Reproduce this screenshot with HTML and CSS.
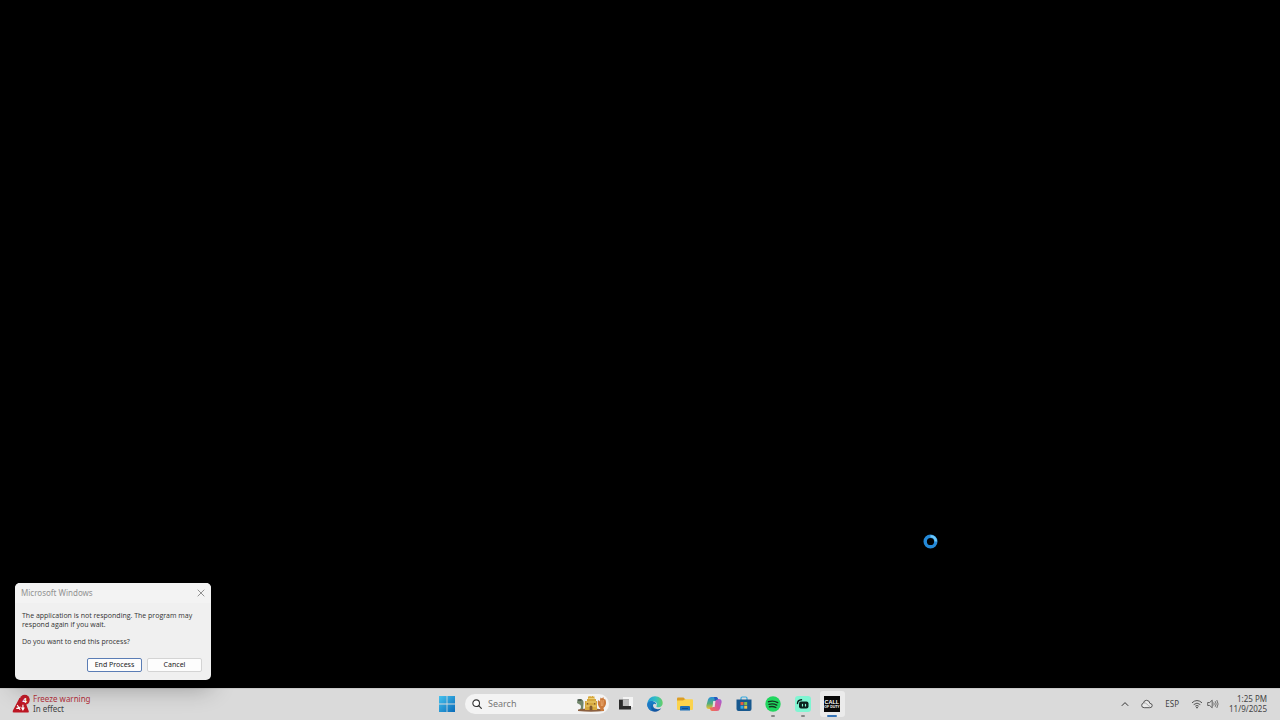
FILE: index.html
```html
<!DOCTYPE html>
<html lang="en">

<head>
  <meta charset="UTF-8">
  <meta name="viewport" content="width=device-width, initial-scale=1.0">
  <title>Desktop</title>
  <link rel="stylesheet" href="styles.css">
</head>

<body>
  <main class="desktop">
    <svg class="busy" viewBox="0 0 16 16" aria-hidden="true">
      <circle cx="8" cy="8" r="5" fill="none" stroke="#2489d8" stroke-width="3.2"/>
      <path d="M8 3A5 5 0 0 1 13 8" fill="none" stroke="#6cc8fa" stroke-width="2.4"/>
    </svg>

    <section class="dialog" role="dialog" aria-labelledby="dialog-title">
      <header class="dialog-bar">
        <h1 id="dialog-title">Microsoft Windows</h1>
        <button class="close" type="button" aria-label="Close">
          <svg viewBox="0 0 8 8"><path d="M.7.7l6.6 6.6M7.3.7L.7 7.3" fill="none" stroke="#777" stroke-width=".8"/></svg>
        </button>
      </header>
      <div class="dialog-text">
        <p>The application is not responding. The program may respond again if you wait.</p>
        <p>Do you want to end this process?</p>
      </div>
      <div class="dialog-buttons">
        <button class="btn primary" type="button">End Process</button>
        <button class="btn" type="button">Cancel</button>
      </div>
    </section>
  </main>

  <footer class="taskbar">
    <button class="weather" type="button">
      <svg class="weather-icon" viewBox="0 0 20 20">
        <path d="M8 3.500L.8 17q-.7 2 1.300 2h14q2.200 0 1.400-2L14 8z" fill="#bd1724"/>
        <circle cx="13.400" cy="5.600" r="5.300" fill="#c21c29"/>
        <path d="M5.500 11l3 5M4.500 14.800l4.500-1.600M11.500 10.800v5.400M10 13.600l1.500 2.600 1.400-2.600" fill="none" stroke="#fff" stroke-width="1.200"/>
        <text class="badge" x="13.400" y="8.500" text-anchor="middle">4</text>
      </svg>
      <span class="weather-text">
        <span class="alert">Freeze warning</span>
        <span>In effect</span>
      </span>
    </button>

    <nav class="center">
      <button class="start" type="button" aria-label="Start">
        <svg viewBox="0 0 16 16">
          <defs>
            <linearGradient id="win" gradientUnits="userSpaceOnUse" x1="0" y1="0" x2="16" y2="16">
              <stop offset="0" stop-color="#45c2ee"/>
              <stop offset="1" stop-color="#096bb9"/>
            </linearGradient>
          </defs>
          <path d="M0 0h7.600v7.600H0zM8.400 0H16v7.600H8.400zM0 8.400h7.600V16H0zM8.400 8.400H16V16H8.400z" fill="url(#win)"/>
        </svg>
      </button>

      <label class="search">
        <svg class="glass" viewBox="0 0 12 12">
          <circle cx="5" cy="5" r="4" fill="#fff" stroke="#333" stroke-width="1.300"/>
          <path d="M8 8l3.200 3.200" stroke="#333" stroke-width="1.500" stroke-linecap="round"/>
        </svg>
        <input type="search" placeholder="Search" aria-label="Search">
        <svg class="castle" viewBox="0 0 30 18">
          <path d="M3 15q3-2 1.500-5L1 8q0-4 3.600-4 3 .5 3 4L7 15z" fill="#71866b"/>
          <path d="M1.500 5h4" stroke="#3b4a42" stroke-width="1.400"/>
          <path d="M2 14.500q12-2 26 0v1.500q-13 1.500-26 0z" fill="#8c6040"/>
          <path d="M9 6h2V4h1V1.500h1.500V1h1v.5h1.500V1h1v.5h1.500V4H20v2h1v9H9z" fill="#d6a83c"/>
          <path d="M10 7h10M10 11h10M12.500 3.500h5.500" stroke="#edcf72" stroke-width="1"/>
          <path d="M13.600 15v-3.500q1.400-2 2.800 0V15zM11 8h1.200v1.600H11zM18 8h1.200v1.600H18z" fill="#80572d"/>
          <path d="M24.500 16q.5-2-1.500-4-2-3.500-.8-7l1.500 1.500.8-4 1.500 1 1.300-1.500.6 2 1.500.5q1.500 4-.5 7L27.500 13l.5 3z" fill="#cc7a3b"/>
          <path d="M25 5l.4 6M27.200 5l-.5 6" stroke="#edae73" stroke-width=".9"/>
        </svg>
      </label>

      <div class="apps">
        <button class="app" type="button" aria-label="Task view">
          <svg viewBox="0 0 16 16">
            <path d="M5 1h10v10H5z" fill="#f4f4f4"/>
            <path d="M1 3.500h10v8H1z" fill="#555"/>
            <path d="M5 3.500h6V10H5z" fill="#bdbdbd"/>
            <path d="M1 4h3.500v6H13v3.500H1z" fill="#2b2b2b"/>
          </svg>
        </button>
        <button class="app" type="button" aria-label="Edge">
          <svg viewBox="0 0 16 16">
            <defs>
              <linearGradient id="edge-top" x1="0" y1="0" x2="1" y2="0">
                <stop offset="0" stop-color="#239cd8"/>
                <stop offset=".55" stop-color="#31bfc4"/>
                <stop offset="1" stop-color="#66cf63"/>
              </linearGradient>
              <linearGradient id="edge-low" x1="0" y1="0" x2="0" y2="1">
                <stop offset="0" stop-color="#1686cc"/>
                <stop offset="1" stop-color="#114f9c"/>
              </linearGradient>
            </defs>
            <path d="M.3 8C.7 3.200 4 .3 8 .3c4.600 0 7.700 3 7.700 6.700 0 2.500-1.700 4.200-4.200 4.200-1.700 0-2.700-.7-2-1.500C11 7.500 9 5.200 6 5.200 3.500 5.200 1 6.300.3 8z" fill="url(#edge-top)"/>
            <path d="M.3 8C1 5.700 3.500 4.700 6 5.200c2 .4 3.400 1.700 3.300 3.300C7.500 7 6 8 6 9.800c0 2.800 4.300 4.500 8.300 2.500C12.700 14.600 10.500 15.700 8 15.700 3.600 15.700 0 12.400.3 8z" fill="url(#edge-low)"/>
            <path d="M6 5.200C3 6.700 2.500 11.500 6 15.300 2.500 14.400 0 11.500.3 8 1 6 3.500 4.800 6 5.200z" fill="#1b79c5"/>
          </svg>
        </button>
        <button class="app" type="button" aria-label="File Explorer">
          <svg viewBox="0 0 16 16">
            <path d="M0 2.500Q0 1.500 1 1.500h5.500l2 2V7H0z" fill="#dc9d24"/>
            <path d="M0 4.500h6l2-1.300h7q1 0 1 1V13q0 1-1 1H1q-1 0-1-1z" fill="#fbd34c"/>
            <path d="M3 14.500v-3.500q0-1 1-1h8q1 0 1 1v3.500z" fill="#1d70b8"/>
            <path d="M5 12h6v1H5z" fill="#104f8c"/>
          </svg>
        </button>
        <button class="app" type="button" aria-label="Copilot">
          <svg viewBox="0 0 16 16">
            <defs>
              <linearGradient id="cop-left" x1="0" y1="0" x2="0" y2="1">
                <stop offset="0" stop-color="#248edf"/>
                <stop offset=".55" stop-color="#55ae76"/>
                <stop offset="1" stop-color="#f2c32e"/>
              </linearGradient>
              <linearGradient id="cop-right" x1="1" y1="0" x2="0" y2="1">
                <stop offset="0" stop-color="#9c61dc"/>
                <stop offset=".5" stop-color="#db5695"/>
                <stop offset="1" stop-color="#f57842"/>
              </linearGradient>
            </defs>
            <path d="M5 1h5q1.500 0 2 2l.5 1.500h-2q-1.500 0-2 1.500L6.700 11q-.7 2-2.500 2H3Q0 13 .4 9.500L2 3.500Q2.600 1 5 1z" fill="url(#cop-left)"/>
            <path d="M11 15H6q-1.500 0-2-2l-.5-1.500h2q1.500 0 2-1.500L9.300 5q.7-2 2.500-2H13q3 0 2.600 3.500L14 12.500q-.6 2.500-3 2.500z" fill="url(#cop-right)"/>
            <path d="M7.200 5h2.200L8.700 11H6.500z" fill="#e5dedf"/>
            <path d="M8 1h2q1.500 0 2 2l.2.500Q10 3 9 5z" fill="#2456bd"/>
          </svg>
        </button>
        <button class="app" type="button" aria-label="Microsoft Store">
          <svg viewBox="0 0 16 16">
            <path d="M5 4V2.200Q5 1 6.200 1h3.600Q11 1 11 2.200V4" fill="none" stroke="#33a8df" stroke-width="1.200"/>
            <path d="M.5 3.500h15V13q0 2-2 2h-11q-2 0-2-2z" fill="#17588e"/>
            <path d="M4.500 6h3v3h-3z" fill="#e65c40"/>
            <path d="M8.200 6h3v3h-3z" fill="#83bd49"/>
            <path d="M4.500 9.700h3v3h-3z" fill="#35a9e1"/>
            <path d="M8.200 9.700h3v3h-3z" fill="#efc34a"/>
          </svg>
        </button>
        <button class="app running" type="button" aria-label="Spotify">
          <svg viewBox="0 0 16 16">
            <circle cx="8" cy="8" r="7.700" fill="#20d65f"/>
            <path d="M3.500 5.700q5-1.500 9.200.9M4 8.300q4.200-1.200 7.800.8M4.500 10.800q3.400-.9 6.400.7" fill="none" stroke="#14351f" stroke-width="1.400" stroke-linecap="round"/>
          </svg>
        </button>
        <button class="app running" type="button" aria-label="Streamlabs">
          <svg viewBox="0 0 16 16">
            <rect width="16" height="16" rx="3" fill="#80f5d2"/>
            <rect x="4" y="5.500" width="9.500" height="7" rx="2" fill="#0b211d"/>
            <path d="M2.500 7.500q0-3.500 4-3.800" fill="none" stroke="#0b211d" stroke-width="1.400" stroke-linecap="round"/>
            <path d="M7.500 8.300v1.600M10.500 8.300v1.600" stroke="#80f5d2" stroke-width="1.200" stroke-linecap="round"/>
          </svg>
        </button>
        <button class="app running active" type="button" aria-label="Call of Duty">
          <svg viewBox="0 0 32 32">
            <path d="M0 0h32v32H0z" fill="#080808"/>
            <text class="cod-top" x="1" y="16">CALL</text>
            <text class="cod-low" x="16" y="24" text-anchor="middle">OF DUTY</text>
          </svg>
        </button>
      </div>
    </nav>

    <div class="tray">
      <button type="button" aria-label="Show hidden icons">
        <svg class="chevron" viewBox="0 0 8 8"><path d="M.8 5.800L4 2.600l3.200 3.200" fill="none" stroke="#333" stroke-width="1"/></svg>
      </button>
      <button type="button" aria-label="OneDrive">
        <svg class="cloud" viewBox="0 0 12 10">
          <path d="M3.200 8.700h5.500q2.500 0 2.500-2.200 0-2-2.300-2.100Q8.400 1.300 5.500 1.300 2.800 1.300 2.600 4 .7 4.400.7 6.400q0 2.300 2.500 2.300z" fill="#e9e9e9" stroke="#444" stroke-width=".9"/>
          <path d="M3 4q1.800-.3 3 1.200t3 2.300" fill="none" stroke="#888" stroke-width=".6"/>
        </svg>
      </button>
      <button class="lang" type="button">ESP</button>
      <button class="network" type="button" aria-label="Network and volume">
        <svg viewBox="0 0 12 10">
          <path d="M1 3.800q5-4.500 10 0M2.700 5.600q3.300-3 6.600 0M4.300 7.200q1.700-1.500 3.400 0" fill="none" stroke="#444" stroke-width=".9"/>
          <circle cx="6" cy="8.600" r=".8" fill="#333"/>
        </svg>
        <svg viewBox="0 0 12 10">
          <path d="M.7 3.500h2L5.200 1.200v7.600L2.700 6.500h-2z" fill="none" stroke="#444" stroke-width=".8"/>
          <path d="M6.700 3.500q1 1.500 0 3M8.200 2.200q2 2.800 0 5.600M9.800 1q2.600 4 0 8" fill="none" stroke="#555" stroke-width=".8"/>
        </svg>
      </button>
      <button class="clock" type="button">
        <span>1:25 PM</span>
        <span>11/9/2025</span>
      </button>
    </div>
  </footer>
</body>

</html>
```

FILE: styles.css
```css
* {
  box-sizing: border-box;
}

body {
  display: flex;
  flex-direction: column;
  min-height: 100vh;
  margin: 0;
  background: #000;
  font-family: "Noto Sans", "Open Sans", sans-serif;
  font-size: 8px;
  line-height: 10px;
  color: #444;
}

button {
  padding: 0;
  border: 0;
  background: none;
  font: inherit;
  color: inherit;
}

svg {
  display: block;
}

.desktop {
  position: relative;
  flex: 1;
}

.busy {
  position: absolute;
  left: 922px;
  top: 533px;
  width: 17px;
  height: 17px;
}

.dialog {
  position: absolute;
  z-index: 1;
  left: 15px;
  bottom: 8px;
  width: 196px;
  padding-bottom: 8px;
  border-radius: 5px;
  background: #f0f0f0;
  box-shadow: 0 8px 24px rgba(0, 0, 0, 0.3);
}

.dialog-bar {
  display: flex;
  align-items: center;
  justify-content: space-between;
  height: 20px;
  padding: 0 6px;
  border-radius: 5px 5px 0 0;
  background: #f3f3f3;
}

.dialog-bar h1 {
  margin: 0;
  font-size: 8px;
  font-weight: 400;
  color: #929292;
}

.close svg {
  width: 8px;
  height: 8px;
}

.dialog-text {
  padding: 8px 7px 0;
  font-family: "Open Sans", sans-serif;
  font-size: 7px;
  line-height: 9px;
  color: #333;
}

.dialog-text p {
  margin: 0 0 8px;
}

.dialog-buttons {
  display: flex;
  justify-content: flex-end;
  gap: 5px;
  padding: 4px 9px 0;
}

.btn {
  width: 55px;
  height: 14px;
  border: 1px solid #d4d4d4;
  border-radius: 2px;
  background: #fdfdfd;
  font-size: 7px;
  color: #222;
}

.primary {
  border-color: #5b7db5;
}

.taskbar {
  display: grid;
  grid-template-columns: 1fr auto 1fr;
  align-items: center;
  height: 32px;
  padding-bottom: 2px;
  border-top: 1px solid #c9c9c9;
  background: #dadada;
}

.weather {
  display: flex;
  align-items: center;
  justify-self: start;
  gap: 2px;
  padding-left: 12px;
  text-align: left;
}

.weather-icon {
  width: 19px;
  height: 20px;
}

.badge {
  font-size: 8px;
  font-weight: 700;
  fill: #fff;
}

.weather-text span {
  display: block;
}

.weather-text .alert {
  color: #b5303a;
}

.center {
  display: flex;
  align-items: center;
}

.start {
  width: 28px;
}

.start svg {
  width: 16px;
  height: 16px;
  margin: 0 auto;
}

.search {
  display: flex;
  align-items: center;
  gap: 6px;
  width: 144px;
  height: 20px;
  margin: 0 2px 0 4px;
  padding: 0 3px 0 7px;
  border-radius: 10px;
  background: #f3f3f3;
}

.glass {
  width: 10px;
  height: 10px;
}

.search input {
  flex: 1;
  min-width: 0;
  padding: 0;
  border: 0;
  outline: none;
  background: none;
  font: inherit;
  font-size: 9px;
}

.search input::placeholder {
  color: #777;
}

.castle {
  width: 30px;
  height: 18px;
}

.apps {
  display: grid;
  grid-template-columns: repeat(8, 1fr);
  width: 236px;
}

.app {
  position: relative;
  height: 26px;
  border-radius: 3px;
}

.app svg {
  width: 16px;
  height: 16px;
  margin: 0 auto;
}

.running::after {
  content: "";
  position: absolute;
  left: calc(50% - 2px);
  bottom: 0;
  width: 4px;
  height: 2px;
  border-radius: 1px;
  background: #858585;
}

.active {
  margin: 0 2px;
  background: #ebebeb;
}

.active::after {
  left: calc(50% - 5px);
  width: 10px;
  background: #3473b6;
}

.cod-top,
.cod-low {
  font-family: "Liberation Sans", sans-serif;
  font-size: 11px;
  font-weight: 700;
  fill: #fff;
}

.cod-low {
  font-size: 7px;
}

.tray {
  display: flex;
  align-items: center;
  justify-self: end;
  padding-right: 13px;
}

.tray .chevron {
  width: 8px;
  height: 8px;
}

.tray .cloud {
  width: 12px;
  height: 10px;
  margin-left: 12px;
}

.lang {
  margin-left: 12px;
  font-size: 8px;
}

.network {
  display: flex;
  gap: 4px;
  margin: 0 10px 0 12px;
}

.network svg {
  width: 12px;
  height: 10px;
}

.clock {
  text-align: right;
}

.clock span {
  display: block;
}
```
